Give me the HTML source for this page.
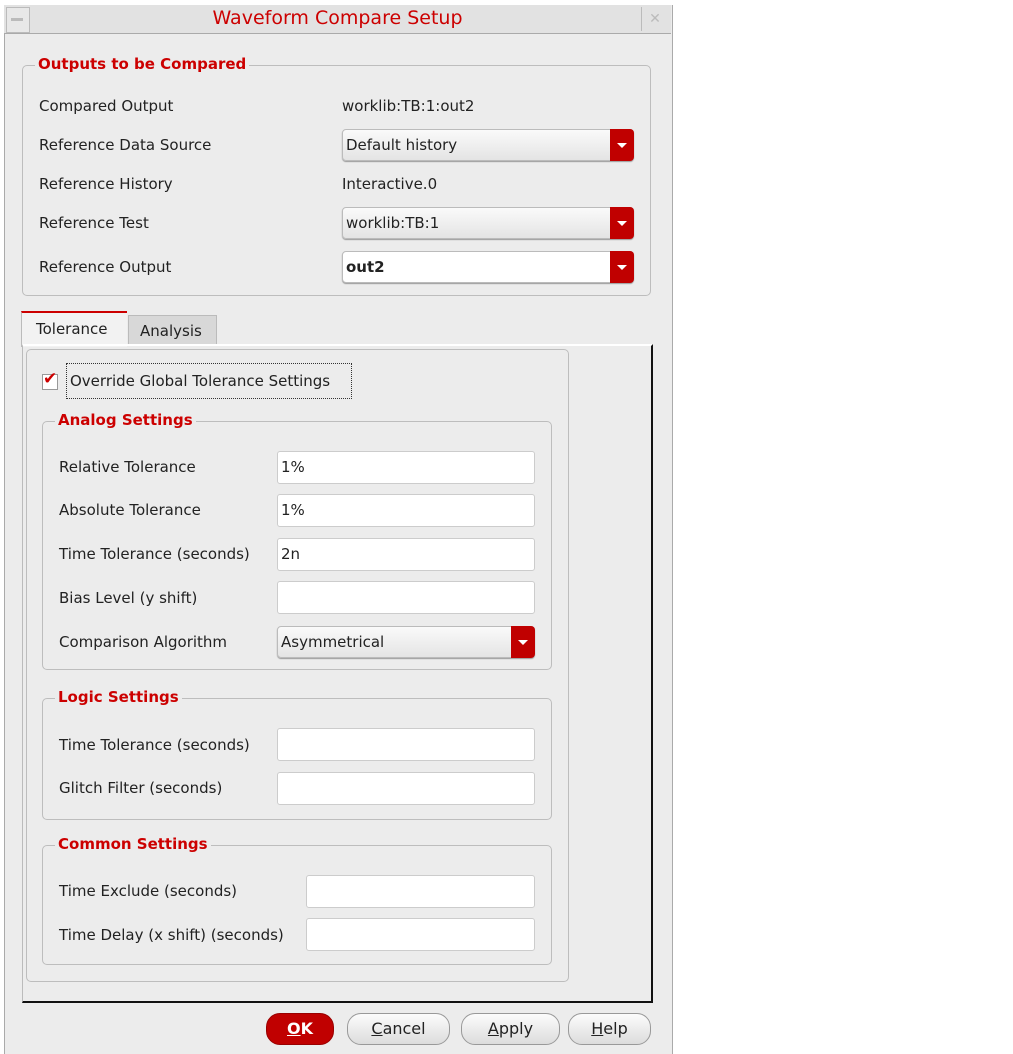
<!DOCTYPE html><html><head><style>
body{margin:0;width:1013px;height:1054px;background:#fff;position:relative;font-family:"DejaVu Sans","Liberation Sans",sans-serif;font-size:15px;color:#222;overflow:hidden}
.a{position:absolute}
.win{left:4px;top:5px;width:667px;height:1049px;background:#ececec;border-left:1px solid #aaa;border-right:1px solid #aaa}
.title{left:4px;top:5px;width:667px;height:28px;background:#e2e2e2;border-bottom:1px solid #aaa}
.grp{border:1px solid #bdbdbd;border-radius:5px}
.lg{color:#cc0000;font-weight:bold;background:#ececec;padding:0 3px;font-size:15px}
.dd{background:linear-gradient(#fafafa,#e4e4e4);border:1px solid #bbb;border-radius:4px;box-shadow:0 1px 1px #999;box-sizing:border-box;padding:6px 3px 0;font-size:15px}
.dd:after{content:"";position:absolute;right:-1px;top:-1px;width:24px;height:32px;background:#c00000;border-radius:0 4px 4px 0}
.ar{position:absolute;right:6px;top:13px;width:0;height:0;border-left:5px solid transparent;border-right:5px solid transparent;border-top:5px solid #fff;z-index:2}
.in{background:#fff;border:1px solid #ccc;border-radius:3px;box-sizing:border-box;padding:6px 3px 0;font-size:15px}
.btn{height:32px;border:1px solid #999;border-radius:14px;background:linear-gradient(#fcfcfc,#dcdcdc);box-sizing:border-box;text-align:center;line-height:30px;font-size:16px}
u{text-decoration:underline}
</style></head><body>
<div class="a win"></div>
<div class="a title"></div>
<div class="a" style="left:6px;top:7px;width:22px;height:24px;border:1px solid #bbb;background:#e8e8e8"></div>
<div class="a" style="left:11px;top:18px;width:12px;height:3px;background:#bbb"></div>
<div class="a" style="left:641px;top:7px;width:26px;height:24px;border-left:1px solid #bbb;color:#bbb;font-size:14px;text-align:center;line-height:24px">✕</div>
<div class="a" style="left:4px;top:7px;width:667px;text-align:center;color:#cc0000;font-size:19px">Waveform Compare Setup</div>

<div class="a grp" style="left:22px;top:65px;width:627px;height:229px"></div>
<div class="a lg" style="left:35px;top:55px">Outputs to be Compared</div>
<div class="a" style="left:39px;top:97px">Compared Output</div>
<div class="a" style="left:342px;top:97px">worklib:TB:1:out2</div>
<div class="a" style="left:39px;top:136px">Reference Data Source</div>
<div class="a dd" style="left:342px;top:129px;width:292px;height:32px">Default history<span class="ar"></span></div>
<div class="a" style="left:39px;top:175px">Reference History</div>
<div class="a" style="left:342px;top:175px">Interactive.0</div>
<div class="a" style="left:39px;top:214px">Reference Test</div>
<div class="a dd" style="left:342px;top:207px;width:292px;height:32px">worklib:TB:1<span class="ar"></span></div>
<div class="a" style="left:39px;top:258px">Reference Output</div>
<div class="a dd" style="left:342px;top:251px;width:292px;height:32px;background:#fff;font-weight:bold">out2<span class="ar"></span></div>

<div class="a" style="left:21px;top:311px;width:105px;height:34px;background:#f2f2f2;border-top:2px solid #cc0000;border-left:1px solid #bbb"></div>
<div class="a" style="left:36px;top:320px">Tolerance</div>
<div class="a" style="left:128px;top:315px;width:87px;height:30px;background:#d8d8d8;border:1px solid #bbb;border-bottom:0"></div>
<div class="a" style="left:140px;top:322px">Analysis</div>
<div class="a" style="left:22px;top:344px;width:628px;height:655px;border-top:2px solid #fff;border-right:2px solid #111;border-bottom:2px solid #111;border-left:1px solid #bbb"></div>
<div class="a grp" style="left:26px;top:349px;width:541px;height:631px"></div>
<div class="a" style="left:42px;top:374px;width:14px;height:14px;border:1px solid #999;background:#fff"></div>
<div class="a" style="left:43px;top:369px;color:#cc0000;font-size:17px;font-weight:bold">✔</div>
<div class="a" style="left:66px;top:363px;width:284px;height:34px;border:1px dotted #333"></div>
<div class="a" style="left:70px;top:372px">Override Global Tolerance Settings</div>

<div class="a grp" style="left:42px;top:421px;width:508px;height:247px"></div>
<div class="a lg" style="left:55px;top:411px">Analog Settings</div>
<div class="a" style="left:59px;top:458px">Relative Tolerance</div>
<div class="a in" style="left:277px;top:451px;width:258px;height:33px">1%</div>
<div class="a" style="left:59px;top:501px">Absolute Tolerance</div>
<div class="a in" style="left:277px;top:494px;width:258px;height:33px">1%</div>
<div class="a" style="left:59px;top:545px">Time Tolerance (seconds)</div>
<div class="a in" style="left:277px;top:538px;width:258px;height:33px">2n</div>
<div class="a" style="left:59px;top:589px">Bias Level (y shift)</div>
<div class="a in" style="left:277px;top:581px;width:258px;height:33px"></div>
<div class="a" style="left:59px;top:633px">Comparison Algorithm</div>
<div class="a dd" style="left:277px;top:626px;width:258px;height:32px">Asymmetrical<span class="ar"></span></div>

<div class="a grp" style="left:42px;top:698px;width:508px;height:120px"></div>
<div class="a lg" style="left:55px;top:688px">Logic Settings</div>
<div class="a" style="left:59px;top:736px">Time Tolerance (seconds)</div>
<div class="a in" style="left:277px;top:728px;width:258px;height:33px"></div>
<div class="a" style="left:59px;top:779px">Glitch Filter (seconds)</div>
<div class="a in" style="left:277px;top:772px;width:258px;height:33px"></div>

<div class="a grp" style="left:42px;top:845px;width:508px;height:118px"></div>
<div class="a lg" style="left:55px;top:835px">Common Settings</div>
<div class="a" style="left:59px;top:882px">Time Exclude (seconds)</div>
<div class="a in" style="left:306px;top:875px;width:229px;height:33px"></div>
<div class="a" style="left:59px;top:926px">Time Delay (x shift) (seconds)</div>
<div class="a in" style="left:306px;top:918px;width:229px;height:33px"></div>

<div class="a btn" style="left:266px;top:1013px;width:68px;background:#c00000;border-color:#900;color:#fff;font-weight:bold"><u>O</u>K</div>
<div class="a btn" style="left:347px;top:1013px;width:103px"><u>C</u>ancel</div>
<div class="a btn" style="left:461px;top:1013px;width:99px"><u>A</u>pply</div>
<div class="a btn" style="left:568px;top:1013px;width:83px"><u>H</u>elp</div>
</body></html>
